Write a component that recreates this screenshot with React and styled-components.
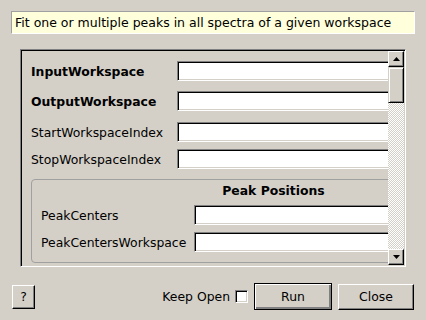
import React from "react";
import styled, { createGlobalStyle } from "styled-components";

const Global = createGlobalStyle`
  html, body { margin: 0; padding: 0; background: #d4d0c8; }
  body { font-family: "DejaVu Sans", "Liberation Sans", sans-serif; font-size: 12.4px; color: #000; }
  * { box-sizing: border-box; }
`;

const Dialog = styled.div`
  width: 426px;
  height: 320px;
  display: flex;
  flex-direction: column;
  padding: 11px 12px 0 11px;
  overflow: hidden;
`;

const Description = styled.div`
  width: 404px;
  height: 23px;
  background: #ffffdc;
  border-top: 1px solid #a0a0a0;
  border-left: 1px solid #a0a0a0;
  border-right: 1px solid #ffffff;
  border-bottom: 1px solid #ffffff;
  padding: 0 0 0 3px;
  display: flex;
  align-items: center;
  white-space: nowrap;
  font-size: 12.5px;
`;

const Frame = styled.div`
  margin: 15px 0 0 9px;
  width: 386px;
  height: 218px;
  display: flex;
  border-top: 1px solid #808080;
  border-left: 1px solid #808080;
  border-right: 1px solid #ffffff;
  border-bottom: 1px solid #ffffff;
  box-shadow: inset 1px 1px #000, inset -1px -1px #d4d0c8;
  padding: 1px;
`;

const Viewport = styled.div`
  flex: 1;
  overflow: hidden;
  position: relative;
`;

const Content = styled.div`
  width: 495px;
  padding: 10px 10px 0 9px;
  display: flex;
  flex-direction: column;
`;

const Row = styled.div`
  display: flex;
  align-items: center;
  height: 20px;
  margin-top: ${(p) => p.$gap || 0}px;
`;

const Label = styled.div`
  width: ${(p) => p.$w}px;
  flex: none;
  font-weight: ${(p) => (p.$bold ? "bold" : "normal")};
  white-space: nowrap;
`;

const Field = styled.div`
  flex: 1;
  height: 20px;
  background: #fff;
  border-top: 1px solid #808080;
  border-left: 1px solid #808080;
  border-right: 1px solid #ffffff;
  border-bottom: 1px solid #ffffff;
  box-shadow: inset 1px 1px #000, inset -1px -1px #d4d0c8;
`;

const Group = styled.fieldset`
  margin: 10px 0 0 0;
  padding: 0 0 0 9px;
  height: 84px;
  border: 1px solid #a0a0a0;
  border-radius: 4px;
  display: flex;
  flex-direction: column;
  min-width: 0;
`;

const GroupTitle = styled.div`
  font-weight: bold;
  text-align: center;
  height: 14px;
  line-height: 14px;
  margin-top: 4px;
`;

const ScrollBar = styled.div`
  width: 16px;
  flex: none;
  display: flex;
  flex-direction: column;
`;

const ArrowButton = styled.div`
  width: 16px;
  height: 16px;
  flex: none;
  background: #d4d0c8;
  border-top: 1px solid #ffffff;
  border-left: 1px solid #ffffff;
  border-right: 1px solid #000;
  border-bottom: 1px solid #000;
  box-shadow: inset -1px -1px #808080;
  display: flex;
  align-items: center;
  justify-content: center;
`;

const Thumb = styled.div`
  width: 16px;
  height: 36px;
  flex: none;
  background: #d4d0c8;
  border-top: 1px solid #d4d0c8;
  border-left: 1px solid #d4d0c8;
  border-right: 1px solid #000;
  border-bottom: 1px solid #000;
  box-shadow: inset 1px 1px #fff, inset -1px -1px #808080;
`;

const Track = styled.div`
  flex: 1;
  background: repeating-conic-gradient(#ffffff 0 25%, #d4d0c8 0 50%) 0 0 / 2px 2px;
`;

const Footer = styled.div`
  margin-top: 16px;
  display: flex;
  align-items: center;
  padding-left: 1px;
`;

const Button = styled.button`
  font-family: "DejaVu Sans", "Liberation Sans", sans-serif;
  font-size: 12.4px;
  color: #000;
  width: ${(p) => p.$w}px;
  height: ${(p) => p.$h}px;
  margin-left: ${(p) => p.$ml || 0}px;
  padding: 0;
  background: #d4d0c8;
  border-top: 1px solid ${(p) => (p.$default ? "#000" : "#fff")};
  border-left: 1px solid ${(p) => (p.$default ? "#000" : "#fff")};
  border-right: 1px solid #000;
  border-bottom: 1px solid #000;
  box-shadow: ${(p) =>
    p.$default
      ? "inset 1px 1px #fff, inset -2px -2px #808080, inset -1px -1px #000"
      : "inset -1px -1px #808080"};
  display: flex;
  align-items: center;
  justify-content: center;
`;

const Spacer = styled.div`
  flex: 1;
`;

const KeepLabel = styled.span`
  white-space: nowrap;
`;

const Check = styled.div`
  width: 13px;
  height: 13px;
  margin-left: 5px;
  background: #fff;
  border-top: 1px solid #808080;
  border-left: 1px solid #808080;
  border-right: 1px solid #fff;
  border-bottom: 1px solid #fff;
  box-shadow: inset 1px 1px #000, inset -1px -1px #d4d0c8;
`;

const Arrow = ({ up }) => (
  <svg width="7" height="4" viewBox="0 0 7 4">
    {up ? <polygon points="3.5,0 7,4 0,4" fill="#000" /> : <polygon points="0,0 7,0 3.5,4" fill="#000" />}
  </svg>
);

export default function App() {
  return (
    <>
      <Global />
      <Dialog>
        <Description>Fit one or multiple peaks in all spectra of a given workspace</Description>
        <Frame>
          <Viewport>
            <Content>
              <Row>
                <Label $w={146} $bold>InputWorkspace</Label>
                <Field />
              </Row>
              <Row $gap={10}>
                <Label $w={146} $bold>OutputWorkspace</Label>
                <Field />
              </Row>
              <Row $gap={11}>
                <Label $w={146}>StartWorkspaceIndex</Label>
                <Field />
              </Row>
              <Row $gap={7}>
                <Label $w={146}>StopWorkspaceIndex</Label>
                <Field />
              </Row>
              <Group>
                <GroupTitle>Peak Positions</GroupTitle>
                <Row $gap={7}>
                  <Label $w={153}>PeakCenters</Label>
                  <Field />
                </Row>
                <Row $gap={7}>
                  <Label $w={153}>PeakCentersWorkspace</Label>
                  <Field />
                </Row>
              </Group>
            </Content>
          </Viewport>
          <ScrollBar>
            <ArrowButton><Arrow up /></ArrowButton>
            <Thumb />
            <Track />
            <ArrowButton><Arrow /></ArrowButton>
          </ScrollBar>
        </Frame>
        <Footer>
          <Button $w={23} $h={24}>?</Button>
          <Spacer />
          <KeepLabel>Keep Open</KeepLabel>
          <Check />
          <Button $w={78} $h={27} $ml={6} $default>Run</Button>
          <Button $w={76} $h={26} $ml={6}>Close</Button>
        </Footer>
      </Dialog>
    </>
  );
}
